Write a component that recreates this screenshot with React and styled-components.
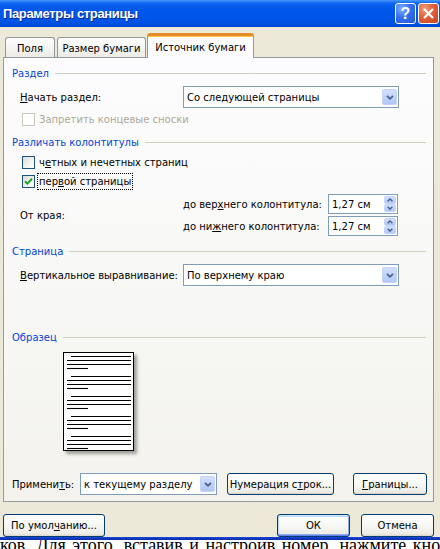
import React from 'react';
import styled, { createGlobalStyle, css } from 'styled-components';

const FONT = `"DejaVu Sans", Tahoma, sans-serif`;

const Global = createGlobalStyle`
  html, body { margin: 0; padding: 0; background: #fff; }
  body {
    width: 440px; height: 549px; overflow: hidden;
    font-family: ${FONT}; font-size: 10px; color: #000;
  }
  * { box-sizing: border-box; }
`;

const Window = styled.div`
  width: 440px; height: 549px; display: flex; flex-direction: column; overflow: hidden;
`;

const TitleBar = styled.div`
  height: 27px; flex: none; display: flex; align-items: center; gap: 2px;
  padding: 0 1px 0 3px;
  background: linear-gradient(to bottom, #4A9BFF 0%, #0C64F0 12%, #0057EC 35%, #0054E6 75%, #0050DC 92%, #0043C4 100%);
`;

const Title = styled.div`
  flex: 1; color: #fff; font: bold 13px "Liberation Sans", Arial, sans-serif;
  text-shadow: 1px 1px 0 #0B2A8C; letter-spacing: -0.35px;
`;

const CaptionButton = styled.div`
  width: 21px; height: 21px; border: 1px solid #fff; border-radius: 3px;
  display: flex; align-items: center; justify-content: center;
  color: #fff; font: bold 16px "Liberation Sans", Arial, sans-serif;
  ${p => p.$close ? css`
    background: radial-gradient(circle at 30% 25%, #F49A7A 0%, #E0603A 45%, #C8441D 100%);
  ` : css`
    background: radial-gradient(circle at 30% 25%, #7FB0FF 0%, #3470EE 45%, #2256D8 100%);
  `}
`;

const Body = styled.div`
  flex: none; height: 510px; background: #ECE9D8;
  padding: 6px 6px 0 3px; display: flex; flex-direction: column;
`;

const TabRow = styled.div`
  height: 24px; display: flex; align-items: flex-end; padding-left: 2px; gap: 2px;
`;

const Tab = styled.div`
  width: ${p => p.$w}px; height: 20px; display: flex; align-items: center; justify-content: center;
  border: 1px solid #919B9C; border-bottom: none; border-radius: 3px 3px 0 0;
  background: linear-gradient(to bottom, #FFFFFF 0%, #F7F7F4 40%, #ECEBE5 100%);
  padding-top: 1px;
  ${p => p.$active && css`
    height: 25px; margin-bottom: -1px; margin-left: -1px; position: relative; z-index: 1;
    background: #FCFCFE; border-top: 3px solid #E68B2C;
    box-shadow: inset 0 1px 0 #FFC83C;
    padding-top: 0;
  `}
`;

const Panel = styled.div`
  width: 431px; height: 445px; border: 1px solid #919B9C;
  background: linear-gradient(to bottom, #FCFCFE 0%, #F8F8F6 50%, #F3F2EC 100%);
  display: flex; flex-direction: column;
`;

const SectionHeader = styled.div`
  height: 14px; margin-top: ${p => p.$mt}px; display: flex; align-items: center;
  padding: 0 7px 0 8px; color: #0046D5;
  &::after { content: ""; flex: 1; height: 1px; background: #D0D0BF; margin-left: 6px; }
`;

const Row = styled.div`
  display: flex; align-items: center; margin-top: ${p => p.$mt}px;
  padding-left: ${p => p.$pl ?? 16}px; height: ${p => p.$h}px;
`;

const Label = styled.div`
  width: ${p => p.$w}px; flex: none; color: ${p => p.$disabled ? '#ACA899' : '#000'};
  white-space: nowrap;
`;

const U = styled.span`text-decoration: underline; text-underline-offset: 1px;`;

const ComboBox = styled.div`
  width: ${p => p.$w}px; height: ${p => p.$h || 22}px; flex: none;
  border: 1px solid #7F9DB9; background: #fff;
  display: flex; align-items: stretch;
`;

const ComboText = styled.div`
  flex: 1; display: flex; align-items: center; padding-left: 3px; white-space: nowrap; overflow: hidden;
`;

const ArrowBox = styled.div`
  width: 15px; margin: 2px 1px 2px 0; border-radius: 2px;
  background: linear-gradient(to bottom, #D3E0FD 0%, #C1D3FB 50%, #B2C7F7 100%);
  border: 1px solid #C3D3FD;
  display: flex; align-items: center; justify-content: center;
`;

const Chevron = ({ up }) => (
  <svg width="8" height="5" viewBox="0 0 8 5">
    <path d={up ? "M1 4.2 L4 1.2 L7 4.2" : "M1 0.8 L4 3.8 L7 0.8"} fill="none" stroke="#4D6185" strokeWidth="1.8" />
  </svg>
);

const Combo = ({ w, h, children }) => (
  <ComboBox $w={w} $h={h}>
    <ComboText>{children}</ComboText>
    <ArrowBox><Chevron /></ArrowBox>
  </ComboBox>
);

const SpinBox = styled.div`
  width: 70px; height: 20px; flex: none; border: 1px solid #7F9DB9; background: #fff;
  display: flex; align-items: stretch;
`;

const SpinButtons = styled.div`
  width: 12px; margin: 1px 1px 1px 0; display: flex; flex-direction: column;
`;

const SpinHalf = styled.div`
  flex: 1; border-radius: 2px; display: flex; align-items: center; justify-content: center;
  background: linear-gradient(to bottom, #D3E0FD 0%, #C1D3FB 50%, #B2C7F7 100%);
  border: 1px solid #C3D3FD;
`;

const SmallChevron = ({ up }) => (
  <svg width="6" height="4" viewBox="0 0 6 4">
    <path d={up ? "M0.6 3.3 L3 0.9 L5.4 3.3" : "M0.6 0.7 L3 3.1 L5.4 0.7"} fill="none" stroke="#4D6185" strokeWidth="1.4" />
  </svg>
);

const Spinner = ({ value }) => (
  <SpinBox>
    <ComboText>{value}</ComboText>
    <SpinButtons>
      <SpinHalf><SmallChevron up /></SpinHalf>
      <SpinHalf><SmallChevron /></SpinHalf>
    </SpinButtons>
  </SpinBox>
);

const CheckRow = styled.div`
  display: flex; align-items: center; height: 13px; margin-top: ${p => p.$mt}px;
  padding-left: 18px; gap: 3px; color: ${p => p.$disabled ? '#ACA899' : '#000'};
`;

const CheckBox = styled.div`
  width: 13px; height: 13px; flex: none; display: flex; align-items: center; justify-content: center;
  border: 1px solid ${p => p.$disabled ? '#CAC8BB' : '#1C5180'};
  background: ${p => p.$disabled ? '#fff' : 'linear-gradient(135deg, #DCDCD7 0%, #F4F4F1 60%, #FFFFFF 100%)'};
`;

const CheckText = styled.span`
  padding: 1px 1px; white-space: nowrap;
  ${p => p.$focus && css`outline: 1px dotted #000; outline-offset: 0; padding: 2px 1px;`}
`;

const Check = ({ checked, disabled, focus, mt, children }) => (
  <CheckRow $mt={mt} $disabled={disabled}>
    <CheckBox $disabled={disabled}>
      {checked && (
        <svg width="9" height="9" viewBox="0 0 9 9">
          <path d="M1 4.2 L3.4 6.6 L8 1.8" fill="none" stroke="#21A121" strokeWidth="2" />
        </svg>
      )}
    </CheckBox>
    <CheckText $focus={focus}>{children}</CheckText>
  </CheckRow>
);

const MarginsBlock = styled.div`
  margin-top: 6px; padding-left: 16px; display: grid;
  grid-template-columns: 163px 145px 70px; grid-template-rows: 20px 20px; row-gap: 2px;
  align-items: center; white-space: nowrap;
`;

const FromEdge = styled.div`grid-row: 1 / span 2; grid-column: 1;`;

const PreviewWrap = styled.div`
  margin: 8px 0 0 59px;
`;

const Page = styled.div`
  width: 71px; height: 99px; background: #fff; border: 1px solid #000;
  box-shadow: 3px 3px 3px rgba(0, 0, 0, 0.35);
`;

const PageLines = () => {
  const lines = [];
  for (let g = 0; g < 5; g++) {
    const y0 = 3.5 + g * 20;
    lines.push(<line key={`${g}a`} x1="7" x2="67" y1={y0} y2={y0} />);
    lines.push(<line key={`${g}b`} x1="3" x2="67" y1={y0 + 4} y2={y0 + 4} />);
    lines.push(<line key={`${g}c`} x1="3" x2="67" y1={y0 + 8} y2={y0 + 8} />);
    lines.push(<line key={`${g}d`} x1="3" x2="24" y1={y0 + 12} y2={y0 + 12} />);
  }
  return (
    <svg width="69" height="97" viewBox="0 0 69 97" style={{ display: 'block' }}>
      <g stroke="#000" strokeWidth="1.1">{lines}</g>
    </svg>
  );
};

const ApplyRow = styled.div`
  margin-top: 22px; display: flex; align-items: center; height: 22px; padding-left: 8px;
`;

const Button = styled.div`
  width: ${p => p.$w}px; height: ${p => p.$h || 23}px; flex: none; margin-left: ${p => p.$ml || 0}px;
  border: 1px solid #003C74; border-radius: 3px;
  display: flex; align-items: center; justify-content: center; white-space: nowrap;
  background: linear-gradient(to bottom, #FFFFFF 0%, #F7F7F4 50%, #ECEBE6 90%, #D6D0C5 100%);
  box-shadow: inset 0 -1px 0 #DCD8CC;
  ${p => p.$default && css`
    box-shadow: inset 0 1px 0 #CEE7FF, inset 0 -1px 0 #6982EE, inset 1px 0 0 #B8D4F8, inset -1px 0 0 #89ADE4,
      inset 0 2px 0 #BCD4F6, inset 0 -2px 0 #89ADE4;
  `}
`;

const FooterRow = styled.div`
  margin-top: 12px; display: flex; align-items: center; height: 23px;
`;

const Spacer = styled.div`flex: 1;`;

const BottomFrame = styled.div`
  height: 3px; flex: none; position: relative; z-index: 1;
  background: linear-gradient(to bottom, #1848D8, #0A2AA8);
`;

const DocArea = styled.div`
  flex: 1; background: #fff; overflow: hidden;
  font: 18px "Liberation Serif", "Times New Roman", serif; line-height: 8px; white-space: nowrap;
  padding-top: 1px; word-spacing: 2px;
`;

export default function App() {
  return (
    <Window>
      <Global />
      <TitleBar>
        <Title>Параметры страницы</Title>
        <CaptionButton>?</CaptionButton>
        <CaptionButton $close>
          <svg width="13" height="13" viewBox="0 0 13 13">
            <path d="M2 2 L11 11 M11 2 L2 11" stroke="#fff" strokeWidth="2.2" />
          </svg>
        </CaptionButton>
      </TitleBar>
      <Body>
        <TabRow>
          <Tab $w={50}>Поля</Tab>
          <Tab $w={89}>Размер бумаги</Tab>
          <Tab $w={107} $active>Источник бумаги</Tab>
        </TabRow>
        <Panel>
          <SectionHeader $mt={8}>Раздел</SectionHeader>
          <Row $mt={6} $h={22}>
            <Label $w={163}><U>Н</U>ачать раздел:</Label>
            <Combo w={216}>Со следующей страницы</Combo>
          </Row>
          <Check mt={5} disabled>Запретить концевые сноски</Check>
          <SectionHeader $mt={9}>Различать колонтитулы</SectionHeader>
          <Check mt={7}>ч<U>е</U>тных и нечетных страниц</Check>
          <Check mt={6} checked focus>пер<U>в</U>ой страницы</Check>
          <MarginsBlock>
            <FromEdge>От края:</FromEdge>
            <div>до вер<U>х</U>него колонтитула:</div>
            <Spinner value="1,27 см" />
            <div>до ни<U>ж</U>него колонтитула:</div>
            <Spinner value="1,27 см" />
          </MarginsBlock>
          <SectionHeader $mt={8}>Страница</SectionHeader>
          <Row $mt={6} $h={22}>
            <Label $w={163}><U>В</U>ертикальное выравнивание:</Label>
            <Combo w={216}>По верхнему краю</Combo>
          </Row>
          <SectionHeader $mt={44}>Образец</SectionHeader>
          <PreviewWrap>
            <Page><PageLines /></Page>
          </PreviewWrap>
          <ApplyRow>
            <Label $w={68}>Примени<U>т</U>ь:</Label>
            <Combo w={137}>к текущему разделу</Combo>
            <Button $w={107} $h={22} $ml={10}>Нумерация с<U>т</U>рок...</Button>
            <Button $w={74} $h={22} $ml={19}><U>Г</U>раницы...</Button>
          </ApplyRow>
        </Panel>
        <FooterRow>
          <Button $w={102}>По умол<U>ч</U>анию...</Button>
          <Spacer />
          <Button $w={73} $default>ОК</Button>
          <Button $w={73} $ml={11}>Отмена</Button>
        </FooterRow>
      </Body>
      <BottomFrame />
      <DocArea>ков. Для этого, вставив и настроив номер, нажмите кнопку</DocArea>
    </Window>
  );
}
